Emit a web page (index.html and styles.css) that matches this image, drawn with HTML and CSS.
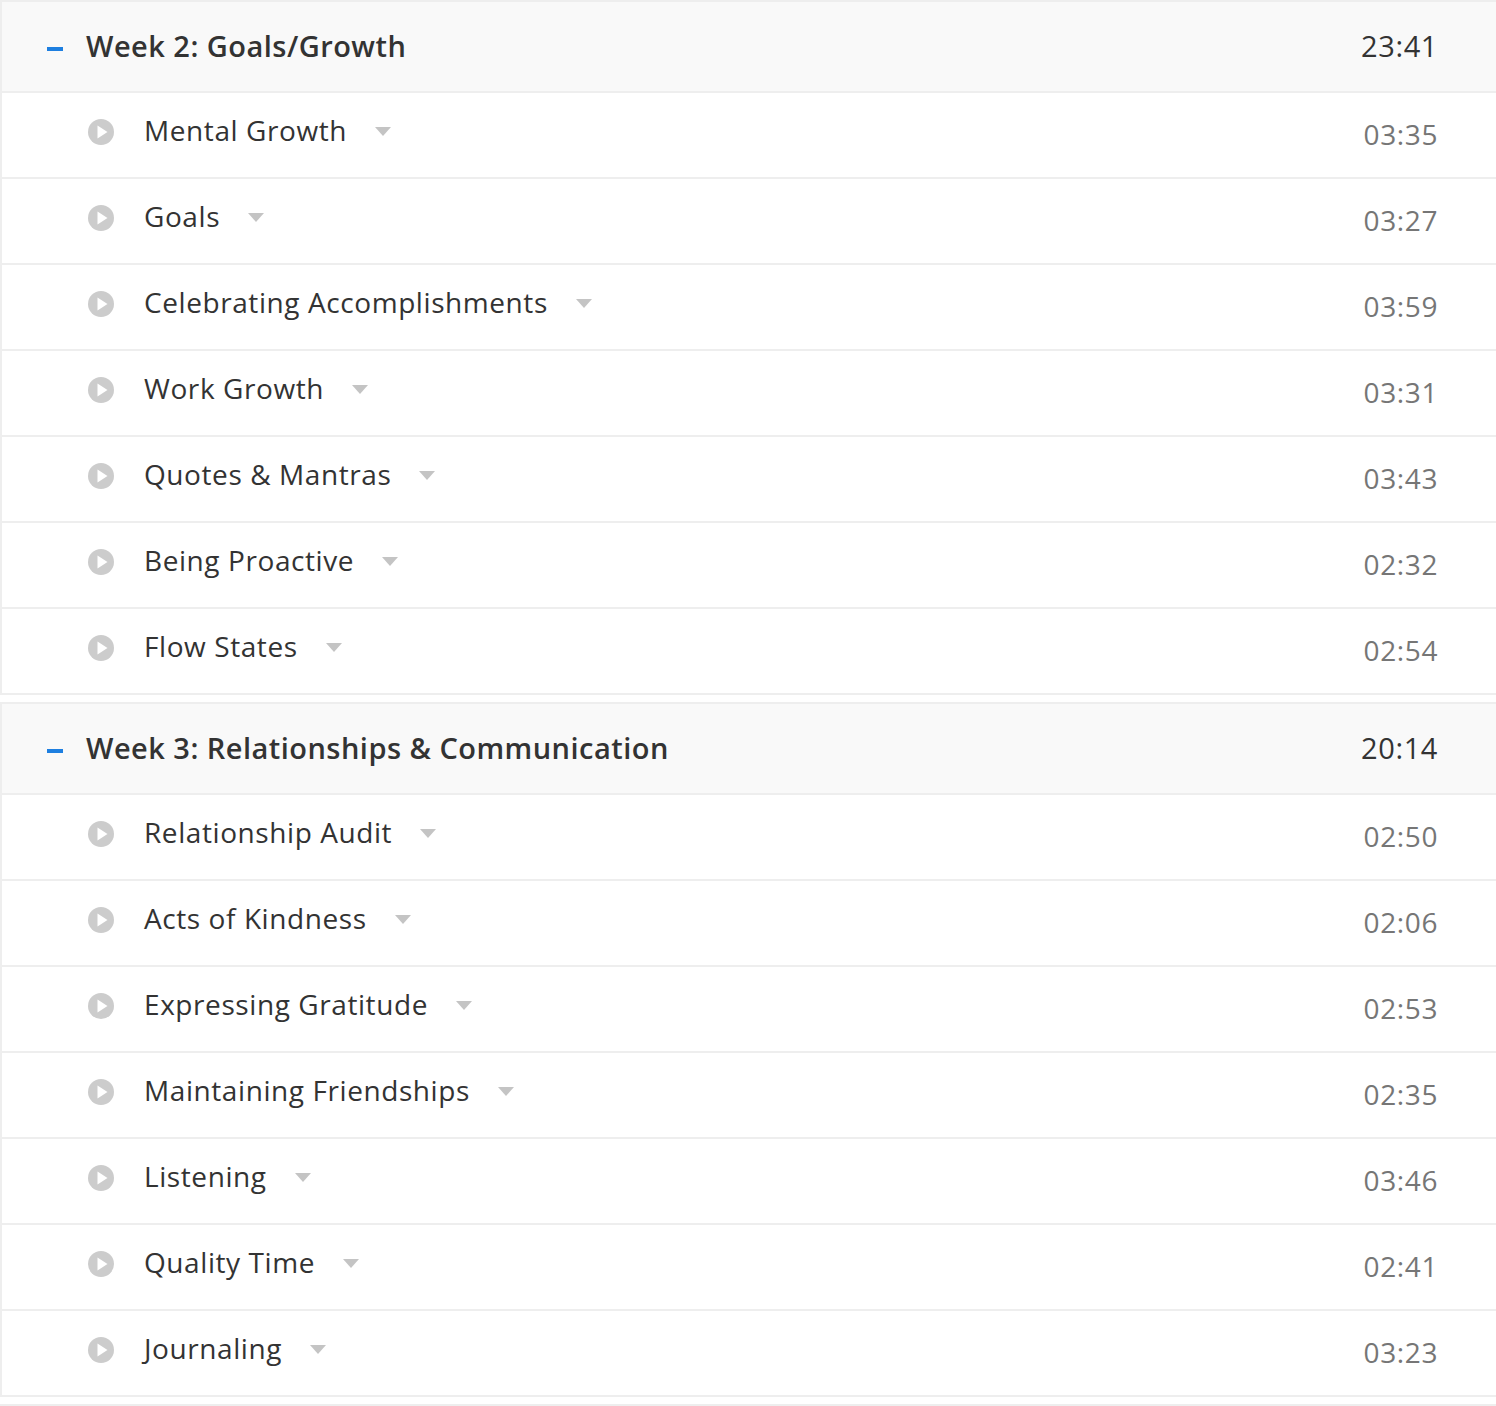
FILE: index.html
```html
<!DOCTYPE html>
<html lang="en">
<head>
  <meta charset="UTF-8" />
  <title>Course Curriculum</title>
  <link rel="stylesheet" href="styles.css">
</head>
<body>
  <svg class="defs" width="0" height="0">
    <symbol id="play" viewBox="0 0 26 26">
      <circle cx="13" cy="13" r="13" fill="#ccc"/>
      <path d="M9.5 6.5v13l10-6.500z" fill="#fff"/>
    </symbol>
  </svg>

  <section class="week">
    <div class="week-head">
      <span class="minus"></span>
      <h2>Week 2: Goals/Growth</h2>
      <span class="week-time">23:41</span>
    </div>
    <div class="lesson"><svg class="play"><use href="#play"/></svg><span class="name">Mental Growth</span><span class="caret"></span><span class="time">03:35</span></div>
    <div class="lesson"><svg class="play"><use href="#play"/></svg><span class="name">Goals</span><span class="caret"></span><span class="time">03:27</span></div>
    <div class="lesson"><svg class="play"><use href="#play"/></svg><span class="name">Celebrating Accomplishments</span><span class="caret"></span><span class="time">03:59</span></div>
    <div class="lesson"><svg class="play"><use href="#play"/></svg><span class="name">Work Growth</span><span class="caret"></span><span class="time">03:31</span></div>
    <div class="lesson"><svg class="play"><use href="#play"/></svg><span class="name">Quotes &amp; Mantras</span><span class="caret"></span><span class="time">03:43</span></div>
    <div class="lesson"><svg class="play"><use href="#play"/></svg><span class="name">Being Proactive</span><span class="caret"></span><span class="time">02:32</span></div>
    <div class="lesson"><svg class="play"><use href="#play"/></svg><span class="name">Flow States</span><span class="caret"></span><span class="time">02:54</span></div>
  </section>

  <section class="week">
    <div class="week-head">
      <span class="minus"></span>
      <h2>Week 3: Relationships &amp; Communication</h2>
      <span class="week-time">20:14</span>
    </div>
    <div class="lesson"><svg class="play"><use href="#play"/></svg><span class="name">Relationship Audit</span><span class="caret"></span><span class="time">02:50</span></div>
    <div class="lesson"><svg class="play"><use href="#play"/></svg><span class="name">Acts of Kindness</span><span class="caret"></span><span class="time">02:06</span></div>
    <div class="lesson"><svg class="play"><use href="#play"/></svg><span class="name">Expressing Gratitude</span><span class="caret"></span><span class="time">02:53</span></div>
    <div class="lesson"><svg class="play"><use href="#play"/></svg><span class="name">Maintaining Friendships</span><span class="caret"></span><span class="time">02:35</span></div>
    <div class="lesson"><svg class="play"><use href="#play"/></svg><span class="name">Listening</span><span class="caret"></span><span class="time">03:46</span></div>
    <div class="lesson"><svg class="play"><use href="#play"/></svg><span class="name">Quality Time</span><span class="caret"></span><span class="time">02:41</span></div>
    <div class="lesson"><svg class="play"><use href="#play"/></svg><span class="name">Journaling</span><span class="caret"></span><span class="time">03:23</span></div>
  </section>

  <div class="next-week"></div>
</body>
</html>
```

FILE: styles.css
```css
body {
  margin: 0;
  font-family: "Open Sans", sans-serif;
  color: #333;
  background: #fff;
  overflow: hidden;
}
.defs {
  position: absolute;
}
.week {
  border-top: 2px solid #eee;
  border-left: 2px solid #eee;
  margin-bottom: 7px;
}
.week-head {
  display: flex;
  align-items: center;
  height: 89px;
  padding: 0 58px 0 45px;
  background: #f9f9f9;
  border-bottom: 2px solid #eee;
}
.minus {
  width: 16px;
  height: 4px;
  margin-top: 5px;
  margin-right: 23px;
  background: #1e7fe0;
}
.week-head h2 {
  flex: 1;
  margin: -2px 0 0;
  font-size: 29px;
  font-weight: 600;
  letter-spacing: 0.47px;
}
.week-time {
  font-size: 29px;
  letter-spacing: 0.6px;
  margin-top: -2px;
}
.lesson {
  display: flex;
  align-items: center;
  height: 84px;
  padding: 0 58px 0 86px;
  border-bottom: 2px solid #eee;
}
.play {
  width: 26px;
  height: 26px;
  margin-top: -6px;
  margin-right: 30px;
}
.name {
  font-size: 28px;
  letter-spacing: 0.58px;
  margin-top: -10px;
}
.caret {
  width: 0;
  height: 0;
  margin-left: 28px;
  margin-top: -7px;
  border-left: 8.5px solid transparent;
  border-right: 8.5px solid transparent;
  border-top: 9px solid #c4c4c4;
}
.time {
  margin-left: auto;
  margin-top: -2px;
  font-size: 28px;
  letter-spacing: 0.6px;
  color: #767676;
}
.next-week {
  border-top: 2px solid #eee;
  border-left: 2px solid #eee;
  height: 10px;
  background: #f9f9f9;
}
```
